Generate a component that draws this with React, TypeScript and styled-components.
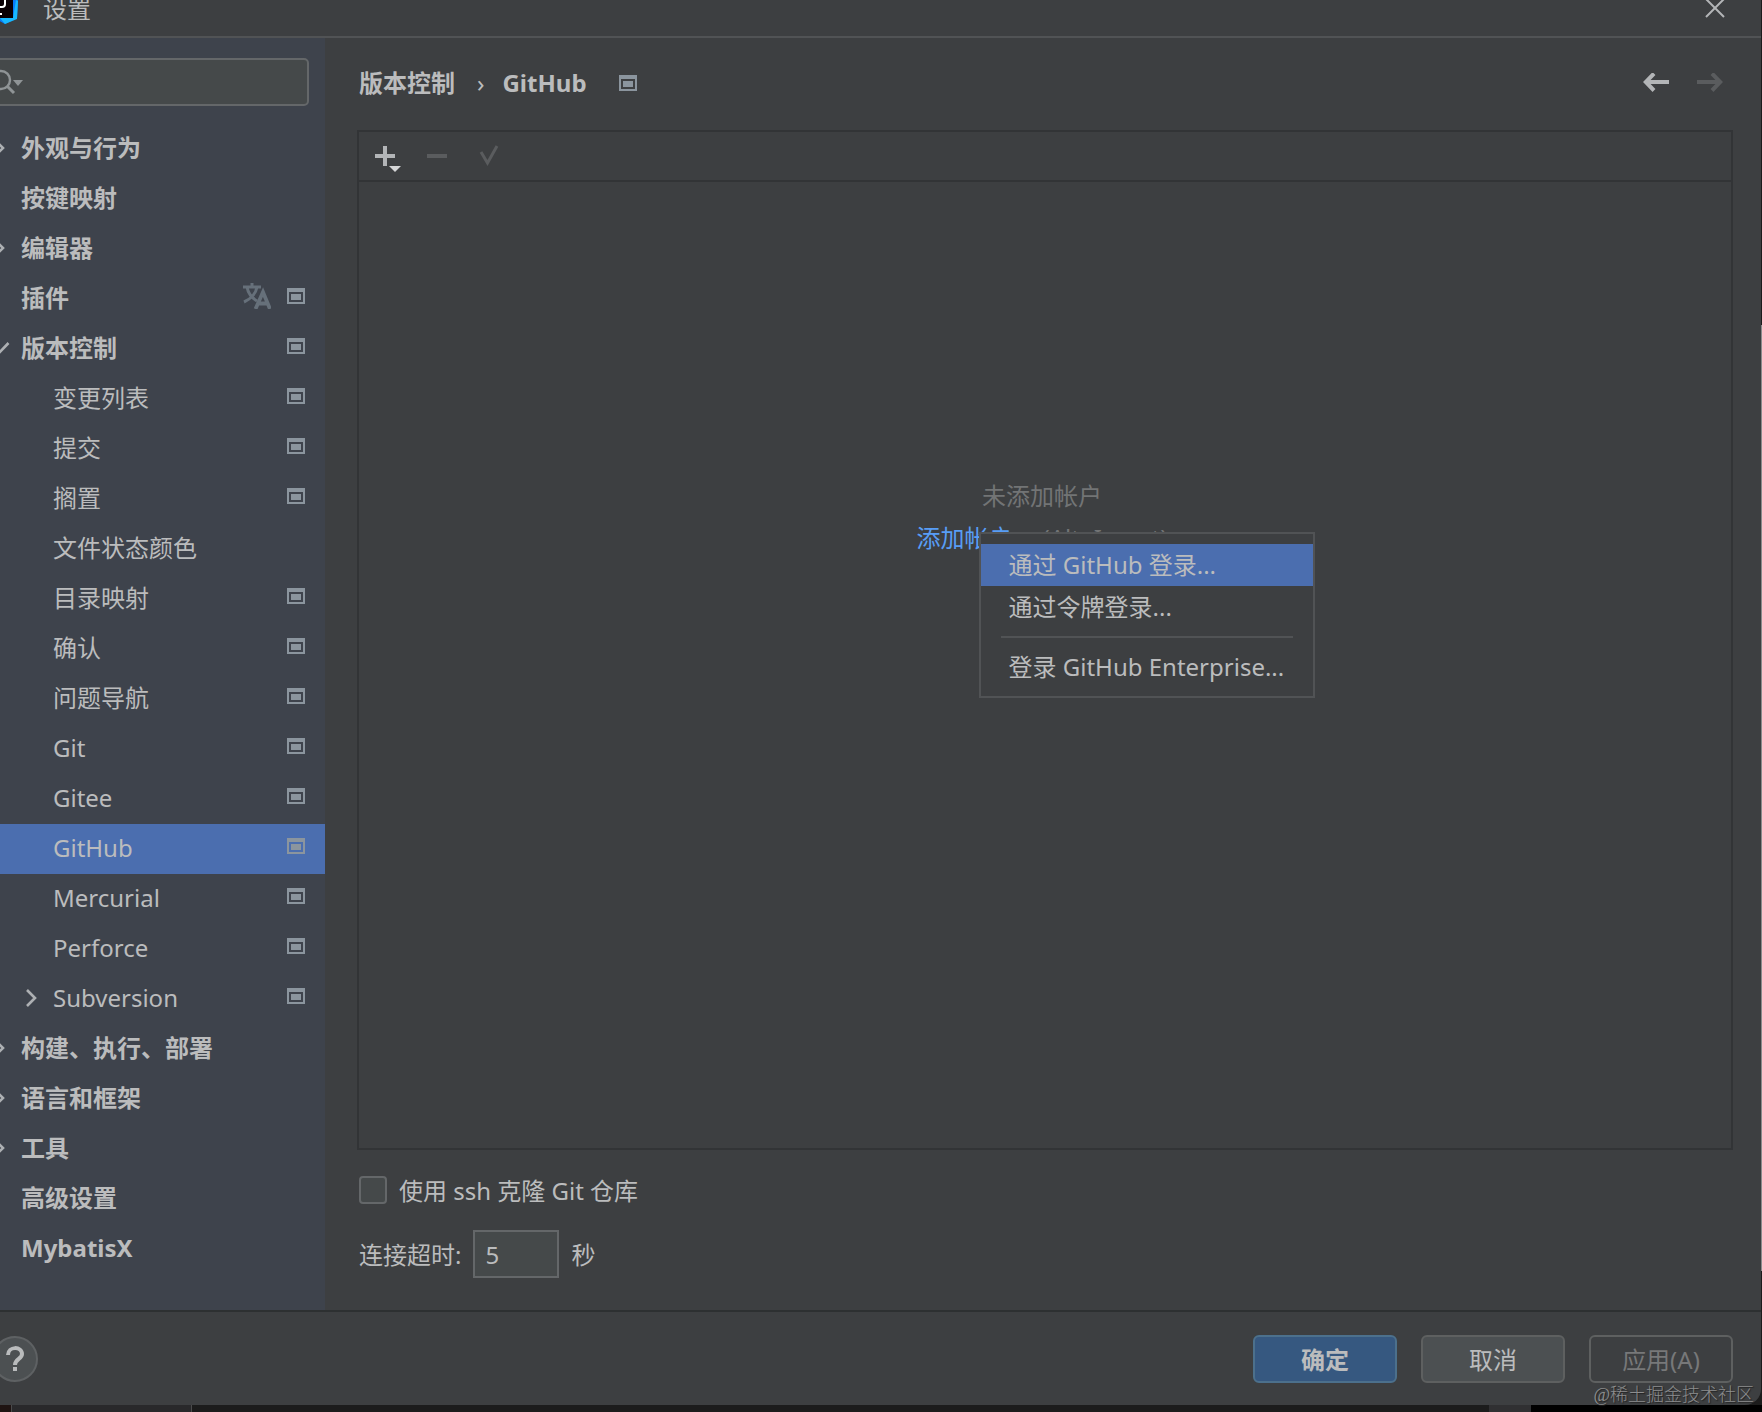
import React, { useState } from "react";
import styled, { createGlobalStyle, css } from "styled-components";

const sans = `"Noto Sans", "Noto Sans CJK SC", sans-serif`;

const GlobalStyle = createGlobalStyle`
  *, *::before, *::after { box-sizing: border-box; }
  body { margin: 0; background: #1c1c1c; overflow: hidden; }
  button, input { font: inherit; color: inherit; }
  svg { display: block; flex: none; }
`;

const Screen = styled.div`
  position: relative;
  display: flex;
  flex-direction: column;
  min-height: 100vh;
  overflow: hidden;
  background: #1c1c1c;
  color: #bbbcbd;
  font: 24px/32px ${sans};
`;

/* The dialog is partly pushed past the top left corner of the screen. */
const Dialog = styled.section`
  flex: 1;
  display: flex;
  flex-direction: column;
  margin: -16px 1px 0 -24px;
  background: #3d3f41;
  border-bottom-right-radius: 16px;
`;

const TitleBar = styled.header`
  display: flex;
  align-items: center;
  height: 54px;
  padding: 0 36px 2px 16px;
  border-bottom: 2px solid #515355;
`;

const Title = styled.h1`
  flex: 1;
  margin: 0 0 0 25px;
  font-size: 24px;
  font-weight: 400;
`;

const IconButton = styled.button<{ $dim?: boolean }>`
  display: flex;
  padding: 0;
  border: 0;
  background: none;
  color: ${(p) => (p.$dim ? "#5a5c5e" : "#b3b5b7")};
`;

const Body = styled.div`
  flex: 1;
  display: flex;
`;

const Sidebar = styled.aside`
  flex: 0 0 349px;
  min-width: 0;
  padding: 20px 0 36px;
  background: #3e434c;
`;

const Search = styled.label`
  display: flex;
  align-items: center;
  gap: 4px;
  height: 48px;
  margin: 0 16px 18px 8px;
  padding: 0 4px;
  border: 2px solid #646769;
  border-radius: 5px;
  background: #45494a;
`;

const SearchInput = styled.input`
  flex: 1;
  min-width: 0;
  border: 0;
  outline: 0;
  background: none;
`;

const Tree = styled.ul`
  margin: 0;
  padding: 0;
  list-style: none;
`;

const TreeRow = styled.li<{ $level: number; $selected?: boolean }>`
  display: flex;
  align-items: center;
  gap: 15px;
  height: 50px;
  padding: 0 20px 2px ${(p) => (p.$level ? 46 : 14)}px;
  font-weight: ${(p) => (p.$level ? 400 : 700)};
  background: ${(p) => (p.$selected ? "#4b6eaf" : "transparent")};
`;

const ArrowSlot = styled.span`
  display: flex;
  width: 16px;
`;

const RowLabel = styled.span`
  flex: 1;
`;

const RowMarks = styled.span`
  display: flex;
  align-items: center;
  gap: 16px;
  padding: 0 0 4px;
`;

const Main = styled.main`
  flex: 1;
  min-width: 0;
  display: flex;
  flex-direction: column;
  padding: 20px 28px 32px 32px;
`;

const PageHead = styled.div`
  display: flex;
  align-items: center;
  height: 50px;
  margin-bottom: 22px;
  padding: 0 10px 0 2px;
`;

const Crumbs = styled.nav`
  flex: 1;
  display: flex;
  align-items: center;
  font-weight: 700;
`;

const CrumbArrow = styled.span`
  margin: 0 18px 0 22px;
  font-weight: 400;
`;

const CrumbMark = styled.span`
  margin-left: 32px;
`;

const NavButtons = styled.div`
  display: flex;
  gap: 28px;
`;

const Panel = styled.section`
  flex: 1;
  display: flex;
  flex-direction: column;
  border: 2px solid #323436;
`;

const Toolbar = styled.div`
  display: flex;
  align-items: center;
  gap: 24px;
  height: 50px;
  padding: 0 14px;
  border-bottom: 2px solid #323436;
`;

const PanelBody = styled.div`
  flex: 1;
  display: grid;
  grid-template-rows: 1fr auto 2fr;
  justify-items: center;
  padding-right: 6px;
`;

const Empty = styled.div`
  position: relative;
  grid-row: 2;
  padding-bottom: 2px;
  text-align: center;
  line-height: 42px;
  color: #727475;
`;

const EmptyLine = styled.p`
  display: flex;
  justify-content: center;
  gap: 30px;
  margin: 0;
`;

const AddLink = styled.a`
  color: #589df6;
  text-decoration: none;
`;

const Menu = styled.div`
  position: absolute;
  z-index: 2;
  top: 57px;
  left: 62px;
  width: 336px;
  padding: 10px 0 8px;
  border: 2px solid #515355;
  background: #3d3f41;
  color: #bbbcbd;
`;

const MenuItem = styled.button<{ $active?: boolean }>`
  display: block;
  width: 100%;
  height: 42px;
  padding: 0 28px;
  border: 0;
  background: ${(p) => (p.$active ? "#4b6eaf" : "none")};
  line-height: 42px;
  text-align: left;
  white-space: nowrap;
`;

const MenuRule = styled.hr`
  height: 2px;
  margin: 8px 20px;
  border: 0;
  background: #515355;
`;

const Options = styled.div`
  display: flex;
  flex-direction: column;
  gap: 20px;
  padding: 20px 2px 0;
`;

const OptionRow = styled.div`
  display: flex;
  align-items: center;
  gap: 12px;
`;

const OptionLabel = styled.label`
  padding-top: 2px;
`;

const boxStyle = css`
  border: 2px solid #646769;
  background: #45494a;
`;

const Checkbox = styled.input`
  appearance: none;
  width: 28px;
  height: 28px;
  margin: 6px 0;
  border-radius: 4px;
  ${boxStyle}
  &:checked { background: #4b6eaf; }
`;

const NumberBox = styled.input`
  width: 86px;
  height: 48px;
  padding: 0 10px;
  border-radius: 0;
  ${boxStyle}
`;

const Footer = styled.footer`
  display: flex;
  align-items: center;
  gap: 24px;
  height: 95px;
  padding: 0 28px 0 16px;
  border-top: 2px solid #2d3031;
`;

const HelpButton = styled.button`
  width: 46px;
  height: 46px;
  margin-right: auto;
  padding: 0;
  border: 2px solid #5e6163;
  border-radius: 50%;
  background: #4c5052;
  display: grid;
  place-items: center;
`;

const tones = {
  primary: css`
    border-color: #4c708c;
    background: #365880;
    font-weight: 700;
  `,
  normal: css`
    border-color: #5e6060;
    background: #4c5052;
  `,
  disabled: css`
    border-color: #5e6060;
    background: none;
    color: #777879;
  `,
};

const DialogButton = styled.button<{ $tone: keyof typeof tones }>`
  width: 144px;
  height: 48px;
  padding: 2px 0 0;
  border: 2px solid;
  border-radius: 6px;
  line-height: 40px;
  ${(p) => tones[p.$tone]}
`;

const Desktop = styled.div`
  display: flex;
  height: 7px;
  background: #1c1c1c;
`;

const DesktopStrip = styled.div<{ $width: number; $color: string; $edge?: boolean }>`
  width: ${(p) => p.$width}px;
  background: ${(p) => p.$color};
  border: 0 solid #4b4b4c;
  border-width: ${(p) => (p.$edge ? "0 1px" : "0")};
`;

const DesktopSpace = styled.div`
  flex: 1;
`;

/* The light window behind, visible along the right edge of the screen. */
const WindowBehind = styled.div`
  position: absolute;
  top: 23%;
  right: 0;
  bottom: 10%;
  width: 1px;
  background: #8a8c8d;
`;

const Watermark = styled.div`
  position: absolute;
  right: 8px;
  bottom: 5px;
  color: #8c8d8e;
  font: 18px/24px "Liberation Serif", "Noto Sans CJK SC", serif;
  font-weight: 300;
  text-shadow: 1px 1px 1px #222;
`;

const ProjectIcon = ({ color = "#8b959e" }: { color?: string }) => (
  <svg width="18" height="16" viewBox="0 0 18 16" shapeRendering="crispEdges">
    <path fill={color} fillRule="evenodd" d="M0 0h18v16H0zM2 4v10h14V4z" />
    <path fill={color} d="M4 6h10v6H4z" />
  </svg>
);

const Chevron = ({ open }: { open?: boolean }) => (
  <svg width="14" height="18" viewBox="0 0 14 18" overflow="visible" fill="none" stroke="#adb0b3" strokeWidth="2.6">
    <path d={open ? "M0 5l9 9L18.500 4" : "M5 1l8 8-8 8"} />
  </svg>
);

const TranslateIcon = () => (
  <svg width="28" height="26" viewBox="0 0 28 26" fill="none" stroke="#66707a" strokeWidth="3">
    <path d="M0 4h18M9 0v4M4 4c1 6 5 11 10 14M14 4c-1 6-6 12-13 15" />
    <path d="M12.500 26l7.500-17 7 17M15 20.500h10" strokeWidth="3.8" />
  </svg>
);

const Logo = () => (
  <svg width="26" height="30" viewBox="0 0 26 30">
    <path fill="#087cfa" d="M2 2l18-2 6 5-1 19-12 6L2 24z" />
    <path fill="#17b8ff" d="M24 6l2 1-1 18-12 5-5-6h13z" />
    <path fill="#0a0004" d="M1 0h20v24H1z" />
    <path fill="none" stroke="#fff" strokeWidth="2" d="M13 0v10q0 3-3 3H7M3 20h7" />
  </svg>
);

const SearchIcon = () => (
  <svg width="36" height="26" viewBox="0 0 36 26" fill="none" stroke="#8f9496" strokeWidth="2.4">
    <circle cx="11" cy="11" r="9" />
    <path d="M17 17l7 7" strokeWidth="3" />
    <path d="M23 11h10l-5 6z" fill="#8f9496" stroke="none" />
  </svg>
);

type Node = { label: string; level?: number; arrow?: "open" | "closed"; mark?: boolean; translate?: boolean };

const nodes: Node[] = [
  { label: "外观与行为", arrow: "closed" },
  { label: "按键映射" },
  { label: "编辑器", arrow: "closed" },
  { label: "插件", mark: true, translate: true },
  { label: "版本控制", arrow: "open", mark: true },
  { label: "变更列表", level: 1, mark: true },
  { label: "提交", level: 1, mark: true },
  { label: "搁置", level: 1, mark: true },
  { label: "文件状态颜色", level: 1 },
  { label: "目录映射", level: 1, mark: true },
  { label: "确认", level: 1, mark: true },
  { label: "问题导航", level: 1, mark: true },
  { label: "Git", level: 1, mark: true },
  { label: "Gitee", level: 1, mark: true },
  { label: "GitHub", level: 1, mark: true },
  { label: "Mercurial", level: 1, mark: true },
  { label: "Perforce", level: 1, mark: true },
  { label: "Subversion", level: 1, arrow: "closed", mark: true },
  { label: "构建、执行、部署", arrow: "closed" },
  { label: "语言和框架", arrow: "closed" },
  { label: "工具", arrow: "closed" },
  { label: "高级设置" },
  { label: "MybatisX" },
];

export default function App() {
  const [ssh, setSsh] = useState(false);
  const [timeout, setTimeoutValue] = useState("5");
  return (
    <Screen>
      <GlobalStyle />
      <Dialog>
        <TitleBar>
          <Logo />
          <Title>设置</Title>
          <IconButton aria-label="关闭">
            <svg width="20" height="20" viewBox="0 0 20 20" stroke="currentColor" strokeWidth="2">
              <path d="M1 0l18 18M19 0L1 18" />
            </svg>
          </IconButton>
        </TitleBar>
        <Body>
          <Sidebar>
            <Search>
              <SearchIcon />
              <SearchInput aria-label="搜索" />
            </Search>
            <Tree>
              {nodes.map((n) => (
                <TreeRow key={n.label} $level={n.level ?? 0} $selected={n.label === "GitHub"}>
                  <ArrowSlot>{n.arrow && <Chevron open={n.arrow === "open"} />}</ArrowSlot>
                  <RowLabel>{n.label}</RowLabel>
                  <RowMarks>
                    {n.translate && <TranslateIcon />}
                    {n.mark && <ProjectIcon />}
                  </RowMarks>
                </TreeRow>
              ))}
            </Tree>
          </Sidebar>
          <Main>
            <PageHead>
              <Crumbs>
                <span>版本控制</span>
                <CrumbArrow>›</CrumbArrow>
                <span>GitHub</span>
                <CrumbMark>
                  <ProjectIcon />
                </CrumbMark>
              </Crumbs>
              <NavButtons>
                <IconButton aria-label="后退">
                  <svg width="26" height="20" viewBox="0 0 26 20" fill="none" stroke="currentColor" strokeWidth="4">
                    <path d="M26 9H3M11 0.500L2.800 9l8.200 8.500" />
                  </svg>
                </IconButton>
                <IconButton aria-label="前进" $dim>
                  <svg width="26" height="20" viewBox="0 0 26 20" fill="none" stroke="currentColor" strokeWidth="4">
                    <path d="M0 9h23M15 0.500l8.200 8.500-8.200 8.500" />
                  </svg>
                </IconButton>
              </NavButtons>
            </PageHead>
            <Panel>
              <Toolbar>
                <IconButton aria-label="添加">
                  <svg width="28" height="32" viewBox="0 0 28 32" fill="currentColor">
                    <path d="M2 14h8V6h4v8h8v4h-8v8h-4v-8H2z" />
                    <path d="M16 26h12l-6 6z" fill="#d5d6d7" />
                  </svg>
                </IconButton>
                <IconButton aria-label="移除" $dim>
                  <svg width="28" height="32" viewBox="0 0 28 32" fill="currentColor">
                    <path d="M2 14h20v4H2z" />
                  </svg>
                </IconButton>
                <IconButton aria-label="设为默认" $dim>
                  <svg width="28" height="32" viewBox="0 0 28 32" fill="none" stroke="currentColor" strokeWidth="3">
                    <path d="M4 12l6.500 11L20 6" />
                  </svg>
                </IconButton>
              </Toolbar>
              <PanelBody>
                <Empty>
                  <EmptyLine>未添加帐户</EmptyLine>
                  <EmptyLine>
                    <AddLink href="#add">添加帐户</AddLink>
                    <span>(Alt+Insert)</span>
                  </EmptyLine>
                  <Menu role="menu">
                    <MenuItem role="menuitem" $active>通过 GitHub 登录...</MenuItem>
                    <MenuItem role="menuitem">通过令牌登录...</MenuItem>
                    <MenuRule />
                    <MenuItem role="menuitem">登录 GitHub Enterprise...</MenuItem>
                  </Menu>
                </Empty>
              </PanelBody>
            </Panel>
            <Options>
              <OptionRow>
                <Checkbox id="ssh" type="checkbox" checked={ssh} onChange={(e) => setSsh(e.target.checked)} />
                <OptionLabel htmlFor="ssh">使用 ssh 克隆 Git 仓库</OptionLabel>
              </OptionRow>
              <OptionRow>
                <OptionLabel htmlFor="timeout">连接超时:</OptionLabel>
                <NumberBox id="timeout" value={timeout} onChange={(e) => setTimeoutValue(e.target.value)} />
                <OptionLabel htmlFor="timeout">秒</OptionLabel>
              </OptionRow>
            </Options>
          </Main>
        </Body>
        <Footer>
          <HelpButton aria-label="帮助">
            <svg width="18" height="26" viewBox="0 0 18 26" fill="none" stroke="#b9bbbc" strokeWidth="4">
              <path d="M2 9c0-9 14-9 14-1 0 5-7 5-7 11M9 21v4" />
            </svg>
          </HelpButton>
          <DialogButton $tone="primary">确定</DialogButton>
          <DialogButton $tone="normal">取消</DialogButton>
          <DialogButton $tone="disabled" disabled>应用(A)</DialogButton>
        </Footer>
      </Dialog>
      <Desktop>
        <DesktopStrip $width={11} $color="#1f1412" />
        <DesktopStrip $width={181} $color="#29292b" $edge />
        <DesktopSpace />
        <DesktopStrip $width={42} $color="#303032" />
        <DesktopStrip $width={231} $color="#000" />
      </Desktop>
      <WindowBehind />
      <Watermark>@稀土掘金技术社区</Watermark>
    </Screen>
  );
}
